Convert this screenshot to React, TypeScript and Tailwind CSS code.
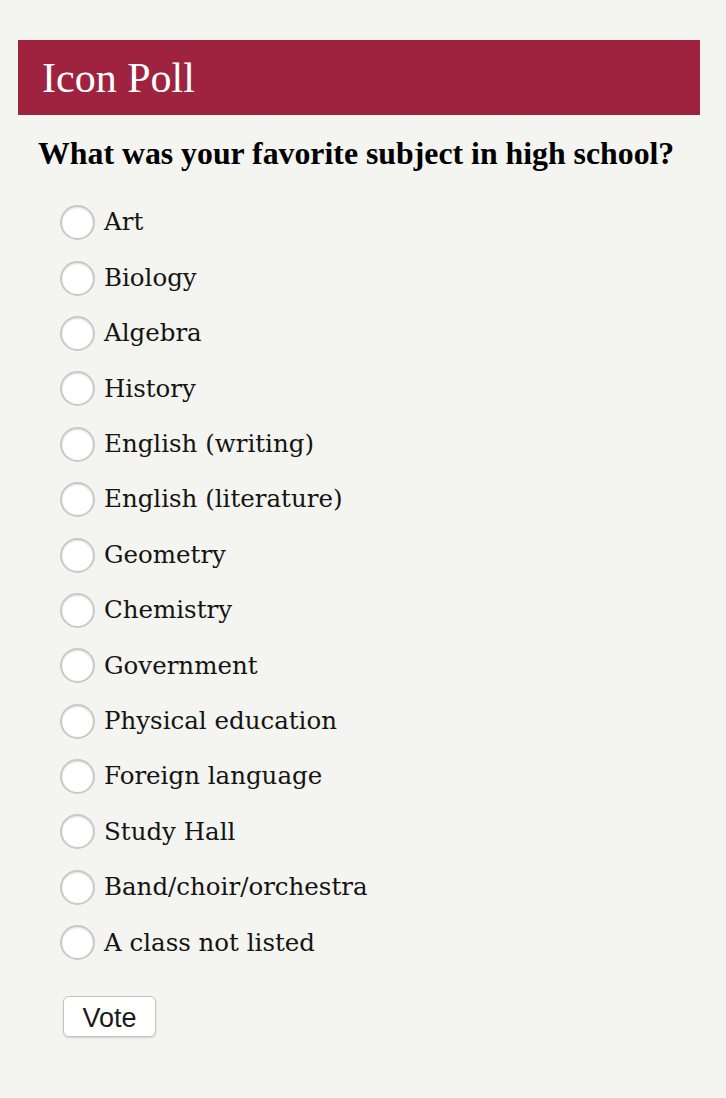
import React from "react";

const options = [
  "Art",
  "Biology",
  "Algebra",
  "History",
  "English (writing)",
  "English (literature)",
  "Geometry",
  "Chemistry",
  "Government",
  "Physical education",
  "Foreign language",
  "Study Hall",
  "Band/choir/orchestra",
  "A class not listed",
];

export default function App() {
  return (
    <div className="min-h-[1098px] w-full bg-[#f4f4f0] pt-[40px]">
      <div className="ml-[18px] w-[682px]">
        <div className="flex h-[75px] items-center bg-[#9f223f] pl-[24px]">
          <h1
            className="text-[42px] leading-none text-white"
            style={{ fontFamily: '"Liberation Serif", "Times New Roman", serif' }}
          >
            Icon Poll
          </h1>
        </div>
        <h2
          className="mt-[21px] pl-[20px] text-[31.8px] font-bold leading-[36px] text-black"
          style={{ fontFamily: '"Liberation Serif", "Times New Roman", serif' }}
        >
          What was your favorite subject in high school?
        </h2>
        <div className="mt-[23px] flex flex-col pl-[42px]">
          {options.map((o) => (
            <label key={o} className="flex h-[55.4px] items-center gap-[9px]">
              <span className="block h-[35px] w-[35px] shrink-0 rounded-full border-2 border-[#c9c9c9] bg-white shadow-[inset_0_1px_2px_rgba(0,0,0,0.12)]" />
              <span
                className="text-[24.5px] leading-none text-[#141414]"
                style={{ fontFamily: '"DejaVu Serif", Georgia, serif' }}
              >
                {o}
              </span>
            </label>
          ))}
        </div>
        <button
          className="ml-[45px] mt-[26px] flex h-[41px] w-[93px] items-center justify-center rounded-[6px] border border-[#c4c4c4] bg-white pt-[3px] text-[27px] leading-none text-[#1a1a1a] shadow-[0_1px_2px_rgba(0,0,0,0.15)]"
          style={{ fontFamily: '"Liberation Sans", Arial, sans-serif' }}
        >
          Vote
        </button>
      </div>
    </div>
  );
}
